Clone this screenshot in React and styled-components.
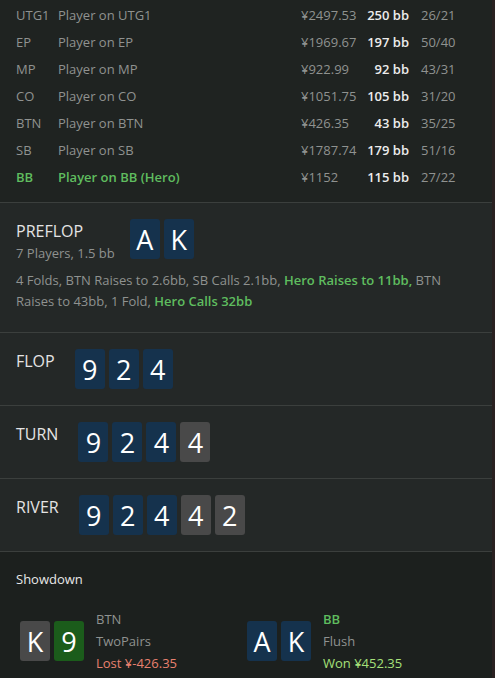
import React from 'react';
import styled, { createGlobalStyle, css } from 'styled-components';

const GlobalStyle = createGlobalStyle`
  html, body {
    margin: 0;
    padding: 0;
    background: #1f2321;
  }
  body {
    font-family: 'Open Sans', 'Noto Sans', sans-serif;
  }
`;

const players = [
  { pos: 'UTG1', name: 'Player on UTG1', money: '¥2497.53', bb: '250 bb', stats: '26/21' },
  { pos: 'EP', name: 'Player on EP', money: '¥1969.67', bb: '197 bb', stats: '50/40' },
  { pos: 'MP', name: 'Player on MP', money: '¥922.99', bb: '92 bb', stats: '43/31' },
  { pos: 'CO', name: 'Player on CO', money: '¥1051.75', bb: '105 bb', stats: '31/20' },
  { pos: 'BTN', name: 'Player on BTN', money: '¥426.35', bb: '43 bb', stats: '35/25' },
  { pos: 'SB', name: 'Player on SB', money: '¥1787.74', bb: '179 bb', stats: '51/16' },
  { pos: 'BB', name: 'Player on BB (Hero)', money: '¥1152', bb: '115 bb', stats: '27/22', hero: true },
];

const streets = [
  { name: 'FLOP', cards: [['9'], ['2'], ['4']] },
  { name: 'TURN', cards: [['9'], ['2'], ['4'], ['4', 'gray']] },
  { name: 'RIVER', cards: [['9'], ['2'], ['4'], ['4', 'gray'], ['2', 'gray']] },
];

function Card({ rank, tone }) {
  return <CardBox tone={tone}>{rank}</CardBox>;
}

function App() {
  return (
    <>
      <GlobalStyle />
      <Page>
        <PlayerTable>
          {players.map(p => (
            <PlayerRow key={p.pos} hero={p.hero}>
              <Pos>{p.pos}</Pos>
              <Name>{p.name}</Name>
              <Money>{p.money}</Money>
              <Stack>{p.bb}</Stack>
              <Stats>{p.stats}</Stats>
            </PlayerRow>
          ))}
        </PlayerTable>

        <Street>
          <StreetHead preflop>
            <TitleBlock>
              <StreetName>PREFLOP</StreetName>
              <Sub>7 Players, 1.5 bb</Sub>
            </TitleBlock>
            <Cards>
              <Card rank='A' />
              <Card rank='K' />
            </Cards>
          </StreetHead>
          <Actions>
            4 Folds, BTN Raises to 2.6bb, SB Calls 2.1bb, <Hero>Hero Raises to 11bb,</Hero> BTN
            Raises to 43bb, 1 Fold, <Hero>Hero Calls 32bb</Hero>
          </Actions>
        </Street>

        {streets.map(s => (
          <Street key={s.name}>
            <StreetHead>
              <StreetName>{s.name}</StreetName>
              <Cards>
                {s.cards.map(([r, tone], i) => (
                  <Card key={i} rank={r} tone={tone} />
                ))}
              </Cards>
            </StreetHead>
          </Street>
        ))}

        <Showdown>
          <ShowTitle>Showdown</ShowTitle>
          <Hands>
            <Hand>
              <Cards>
                <Card rank='K' tone='gray' />
                <Card rank='9' tone='green' />
              </Cards>
              <HandInfo>
                <HandLine>BTN</HandLine>
                <HandLine>TwoPairs</HandLine>
                <HandLine result='lost'>Lost ¥-426.35</HandLine>
              </HandInfo>
            </Hand>
            <Hand>
              <Cards>
                <Card rank='A' />
                <Card rank='K' />
              </Cards>
              <HandInfo>
                <HandLine hero>BB</HandLine>
                <HandLine>Flush</HandLine>
                <HandLine result='won'>Won ¥452.35</HandLine>
              </HandInfo>
            </Hand>
          </Hands>
        </Showdown>
      </Page>
    </>
  );
}

const Page = styled.div`
  width: 492px;
  border-right: 3px solid #2a2121;
  background: #1f2321;
  font-size: 13px;
  color: #8f9290;
`;

const PlayerTable = styled.div`
  padding: 1px 0 12px 16px;
  border-bottom: 1px solid #3b3f3d;
`;

const PlayerRow = styled.div`
  display: grid;
  grid-template-columns: 42px 243px 62px 46px auto;
  height: 27px;
  align-items: center;
  ${props =>
    props.hero &&
    css`
      ${Pos}, ${Name} {
        color: #5fbd5f;
        font-weight: 600;
      }
    `}
`;

const Pos = styled.span``;
const Name = styled.span``;
const Money = styled.span``;

const Stack = styled.span`
  color: #ececec;
  font-weight: 600;
  text-align: right;
`;

const Stats = styled.span`
  padding-left: 12px;
`;

const Street = styled.div`
  background: #242827;
  padding: 16px;
  border-bottom: 1px solid #3b3f3d;
`;

const StreetHead = styled.div`
  display: flex;
  align-items: flex-start;
  gap: ${props => (props.preflop ? '15px' : '20px')};
`;

const TitleBlock = styled.div`
  display: flex;
  flex-direction: column;
`;

const StreetName = styled.div`
  font-size: 16px;
  line-height: 24px;
  color: #e4e4e4;
`;

const Sub = styled.div`
  line-height: 20px;
`;

const Cards = styled.div`
  display: flex;
  gap: 4px;
`;

const toneColors = {
  blue: '#15324d',
  gray: '#494949',
  green: '#1b5c1b',
};

const CardBox = styled.div`
  width: 30px;
  height: 40px;
  border-radius: 3px;
  background: ${props => toneColors[props.tone || 'blue']};
  color: #fff;
  font-size: 27px;
  line-height: 1;
  display: flex;
  align-items: center;
  justify-content: center;
`;

const Actions = styled.div`
  margin-top: 7px;
  line-height: 21px;
  padding-bottom: 4px;
`;

const Hero = styled.span`
  color: #5fbd5f;
  font-weight: 600;
`;

const Showdown = styled.div`
  background: #1c201e;
  padding: 18px 16px 8px 16px;
`;

const ShowTitle = styled.div`
  color: #e8e8e8;
  line-height: 18px;
`;

const Hands = styled.div`
  display: grid;
  grid-template-columns: 227px 227px;
  padding: 20px 0 0 4px;
`;

const Hand = styled.div`
  display: flex;
  align-items: center;
  gap: 12px;
`;

const HandInfo = styled.div`
  display: flex;
  flex-direction: column;
`;

const HandLine = styled.div`
  line-height: 22px;
  ${props =>
    props.hero &&
    css`
      color: #5fbd5f;
      font-weight: 600;
    `}
  ${props =>
    props.result === 'lost' &&
    css`
      color: #e8806f;
    `}
  ${props =>
    props.result === 'won' &&
    css`
      color: #a6e07a;
    `}
`;

export default App;
